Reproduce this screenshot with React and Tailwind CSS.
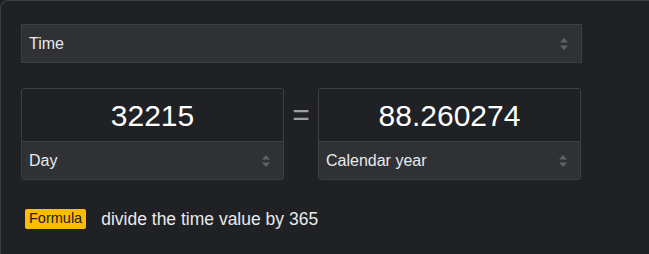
import React from 'react';

const Arrows = () => (
  <svg width="10" height="14" viewBox="0 0 10 14" className="shrink-0">
    <path d="M5 1 L9 5.5 L1 5.5 Z" fill="#5f6368" />
    <path d="M1 8.5 L9 8.5 L5 13 Z" fill="#5f6368" />
  </svg>
);

const Select = ({ label, className = '' }) => (
  <div className={`flex items-center justify-between bg-[#303134] text-[#e8eaed] text-[16px] pl-[7px] pr-[12px] ${className}`}>
    <span>{label}</span>
    <Arrows />
  </div>
);

const UnitBox = ({ value, unit }) => (
  <div className="w-[263px] border border-[#3c4043] rounded-[3px] overflow-hidden">
    <div className="h-[52px] flex items-center justify-center text-[30px] text-white bg-[#202124]">
      {value}
    </div>
    <Select label={unit} className="h-[38px] border-t border-[#3c4043]" />
  </div>
);

export default function App() {
  return (
    <div className="w-[649px] h-[254px] overflow-hidden bg-[#1b1c1f] font-['Liberation_Sans',Arial,sans-serif]">
      <div className="w-[660px] h-[270px] border-l border-t border-[#3c4043] rounded-tl-lg bg-[#202124] pl-5 pt-[23px]">
        {/* Measurement type */}
        <Select label="Time" className="w-[561px] h-[39px] border border-[#3c4043]" />

        {/* Conversion row */}
        <div className="flex items-start mt-[25px]">
          <UnitBox value="32215" unit="Day" />
          <div className="w-[34px] flex justify-center text-[30px] leading-none text-[#9aa0a6] mt-[12px]">=</div>
          <UnitBox value="88.260274" unit="Calendar year" />
        </div>

        {/* Formula */}
        <div className="flex items-center mt-[26px] ml-1">
          <span className="h-[20px] flex items-center px-[4px] rounded-[2px] bg-[#fbbc04] text-[#202124] text-[14.5px]">
            Formula
          </span>
          <span className="ml-[15px] text-[17.5px] text-[#e8eaed]">divide the time value by 365</span>
        </div>
      </div>
    </div>
  );
}
